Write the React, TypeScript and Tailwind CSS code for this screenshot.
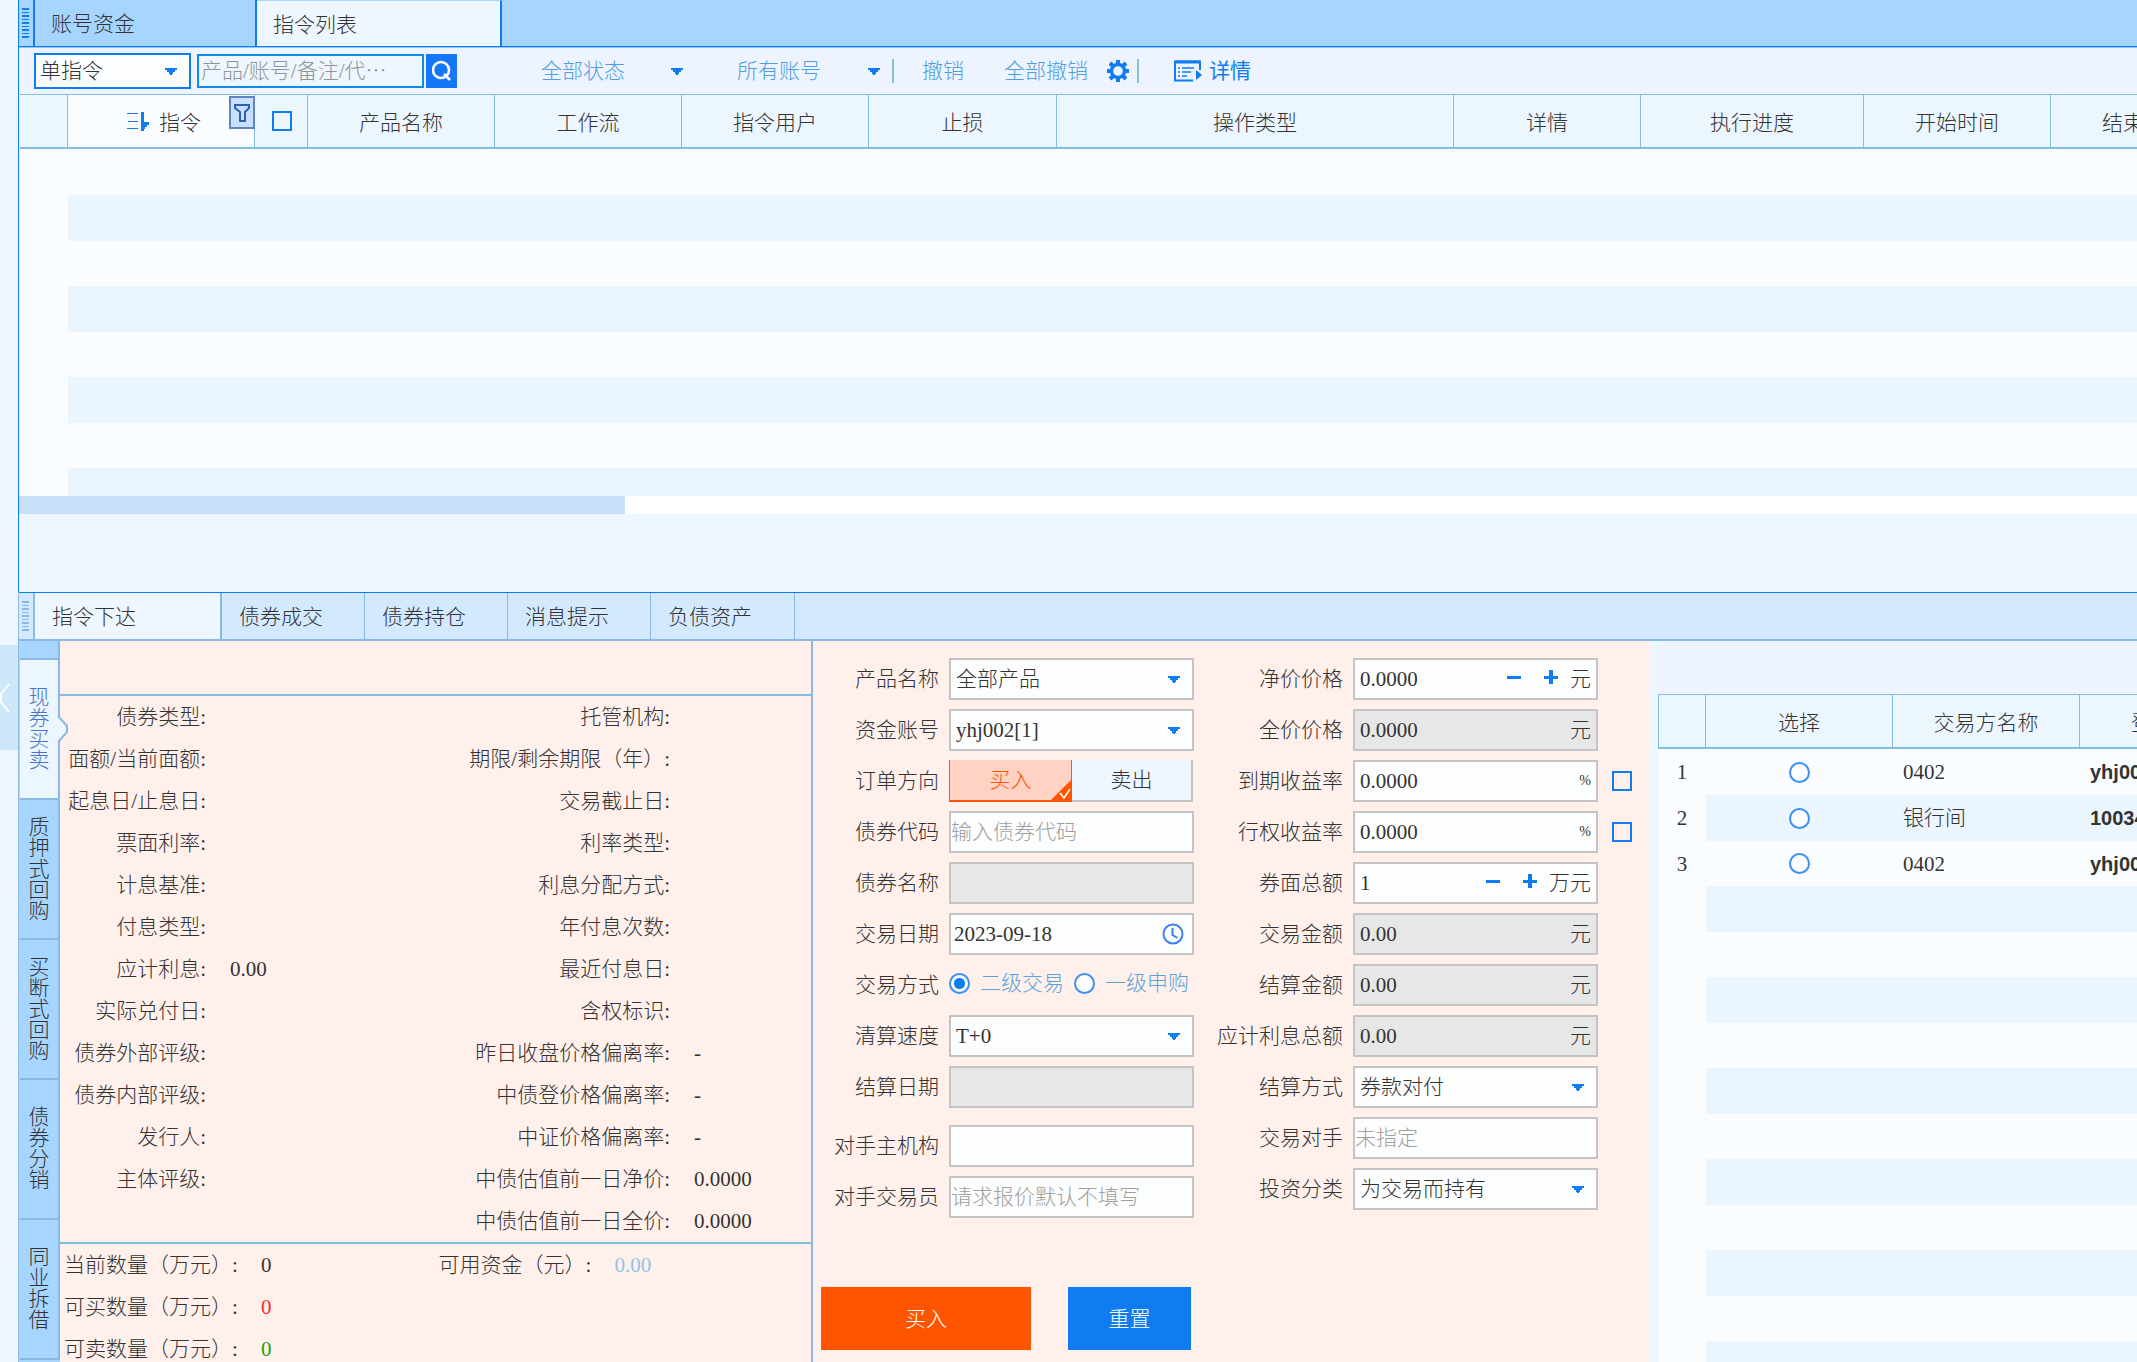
import { useState } from 'react';
import type { ReactNode } from 'react';

const orderColumns = [
  { title: '', width: 48 },
  { title: '指令', width: 187 },
  { title: '全选', width: 53 },
  { title: '产品名称', width: 187 },
  { title: '工作流', width: 187 },
  { title: '指令用户', width: 187 },
  { title: '止损', width: 188 },
  { title: '操作类型', width: 397 },
  { title: '详情', width: 187 },
  { title: '执行进度', width: 223 },
  { title: '开始时间', width: 187 },
  { title: '结束时间', width: 187 },
];

const bottomTabs = ['债券成交', '债券持仓', '消息提示', '负债资产'];

const businessTabs = ['现券买卖', '质押式回购', '买断式回购', '债券分销', '同业拆借'];

const bondInfo = [
  ['债券类型', ''],
  ['面额/当前面额', ''],
  ['起息日/止息日', ''],
  ['票面利率', ''],
  ['计息基准', ''],
  ['付息类型', ''],
  ['应计利息', '0.00'],
  ['实际兑付日', ''],
  ['债券外部评级', ''],
  ['债券内部评级', ''],
  ['发行人', ''],
  ['主体评级', ''],
];

const priceInfo = [
  ['托管机构', ''],
  ['期限/剩余期限（年）', ''],
  ['交易截止日', ''],
  ['利率类型', ''],
  ['利息分配方式', ''],
  ['年付息次数', ''],
  ['最近付息日', ''],
  ['含权标识', ''],
  ['昨日收盘价格偏离率', '-'],
  ['中债登价格偏离率', '-'],
  ['中证价格偏离率', '-'],
  ['中债估值前一日净价', '0.0000'],
  ['中债估值前一日全价', '0.0000'],
];

const quantities = [
  { label: '当前数量（万元）', value: '0', color: 'text-[#333333]' },
  { label: '可买数量（万元）', value: '0', color: 'text-[#ff2a2a]' },
  { label: '可卖数量（万元）', value: '0', color: 'text-[#12a512]' },
];

const counterparties = [
  { name: '0402', account: 'yhj002' },
  { name: '银行间', account: '100345' },
  { name: '0402', account: 'yhj003' },
];

const radioClass =
  'h-[21px] w-[21px] shrink-0 appearance-none rounded-full border-2 border-[#3b8ff5] bg-[#fbfdff] checked:bg-[radial-gradient(circle,#0f7cf2_5px,#fbfdff_6px)]';

const checkClass = 'h-5 w-5 shrink-0 appearance-none border-2 border-[#0f7cf2] bg-transparent';

function Caret() {
  return (
    <svg viewBox="0 0 12 7" className="pointer-events-none h-[7px] w-3 shrink-0" fill="#0f7cf2">
      <path d="M0 0h12v2h-2v2H8v2H7v1H5V6H4V4H2V2H0z" />
    </svg>
  );
}

function Grip({ color }: { color: string }) {
  return (
    <svg viewBox="0 0 7 30" className="h-[30px] w-[7px]" fill={color}>
      {[0, 4, 7, 11, 14, 18, 21, 25, 28].map((y, i) => (
        <rect key={y} x="0" y={y} width="7" height={i % 2 ? 1 : 2} />
      ))}
    </svg>
  );
}

function Field({ label, id, children, extra }: { label: string; id?: string; children: ReactNode; extra?: ReactNode }) {
  return (
    <div className="flex h-[42px] items-center gap-[10px]">
      <label htmlFor={id} className="w-[126px] shrink-0 text-right">
        {label}
      </label>
      <div className="flex h-full w-[245px] shrink-0 items-center">{children}</div>
      {extra}
    </div>
  );
}

function SelectBox({ id, value }: { id: string; value: string }) {
  return (
    <div className="relative flex h-full w-full items-center">
      <select id={id} className="h-full w-full appearance-none border-2 border-[#c4c4c4] bg-[#fcfdfd] pl-[5px] outline-none">
        <option>{value}</option>
      </select>
      <span className="pointer-events-none absolute right-3.5">
        <Caret />
      </span>
    </div>
  );
}

function TextBox({ id, placeholder, disabled }: { id: string; placeholder?: string; disabled?: boolean }) {
  return (
    <input
      id={id}
      type="text"
      placeholder={placeholder}
      disabled={disabled}
      className="h-full w-full border-2 border-[#c4c4c4] bg-[#fcfdfd] outline-none placeholder:text-[#a0a0a0] disabled:bg-[#e7e7e7]"
    />
  );
}

function AmountBox({ id, value, unit, disabled, stepper }: { id: string; value: string; unit: string; disabled?: boolean; stepper?: boolean }) {
  return (
    <div className={`flex h-full w-full items-center border-2 border-[#c4c4c4] pr-[5px] pl-[5px] ${disabled ? 'bg-[#e7e7e7]' : 'bg-[#fcfdfd]'}`}>
      <input id={id} type="text" defaultValue={value} disabled={disabled} className="min-w-0 flex-1 bg-transparent outline-none" />
      {stepper && (
        <div className="mr-3 mb-1 flex items-center gap-[23px]">
          <button type="button" aria-label="减少">
            <svg viewBox="0 0 14 14" className="block h-3.5 w-3.5" fill="#0f7cf2">
              <rect y="6" width="14" height="3" />
            </svg>
          </button>
          <button type="button" aria-label="增加">
            <svg viewBox="0 0 14 14" className="block h-3.5 w-3.5" fill="#0f7cf2">
              <path d="M5 0h4v6h5v3H9v5H5V9H0V6h5z" />
            </svg>
          </button>
        </div>
      )}
      <span className={unit === '%' ? 'text-sm' : ''}>{unit}</span>
    </div>
  );
}

function TopTabs() {
  return (
    <div className="flex h-12 border-b border-[#8fc8fb] bg-[#a6d5ff]">
      <div className="flex w-4 shrink-0 items-center border-r-2 border-b border-[#0f7cf2] pl-[3px]">
        <Grip color="#0f7cf2" />
      </div>
      <button type="button" className="w-[222px] border-r-2 border-b border-[#0f7cf2] pt-0.5 pl-4 text-left">
        账号资金
      </button>
      <button type="button" className="w-[245px] border-t border-r-2 border-b border-t-[#a6d5ff] border-r-[#0f7cf2] border-b-[#0f7cf2] bg-[#eef6ff] pt-0.5 pl-4 text-left">
        指令列表
      </button>
      <div className="flex-1 border-b border-[#0f7cf2]" />
    </div>
  );
}

function Toolbar() {
  return (
    <div className="flex h-[46px] items-center bg-[#edf3ff] pl-[15px] text-[#4f9fdf]">
      <div className="relative flex h-9 w-[157px] items-center">
        <select aria-label="指令类型" className="h-full w-full appearance-none border-2 border-[#0f7cf2] bg-[#fbfdff] pl-1 text-[#333333] outline-none">
          <option>单指令</option>
        </select>
        <span className="pointer-events-none absolute right-3.5">
          <Caret />
        </span>
      </div>
      <input
        type="text"
        aria-label="搜索"
        placeholder="产品/账号/备注/代⋯"
        className="ml-1.5 h-[34px] w-[227px] border-2 border-[#0f8bea] bg-[#eef6ff] pl-0.5 outline-none placeholder:text-[#909497]"
      />
      <button type="button" aria-label="查询" className="ml-0.5 flex h-[34px] w-[31px] items-center justify-center bg-[#1577f5]">
        <svg viewBox="0 0 20 22" className="h-[22px] w-5" fill="none" stroke="#ffffff" strokeWidth="2.6">
          <circle cx="9" cy="10" r="8" />
          <path d="M12 14l6 6" />
        </svg>
      </button>
      <button type="button" className="ml-[84px]">全部状态</button>
      <span className="ml-[46px]"><Caret /></span>
      <button type="button" className="ml-[54px]">所有账号</button>
      <span className="ml-[47px]"><Caret /></span>
      <span className="ml-3 h-6 w-0.5 bg-[#84bde2]" />
      <button type="button" className="ml-[28px]">撤销</button>
      <button type="button" className="ml-[40px]">全部撤销</button>
      <button type="button" aria-label="设置" className="ml-[19px]">
        <svg viewBox="0 0 22 22" className="h-[22px] w-[22px]" fill="none" stroke="#0f7cf2">
          <circle cx="11" cy="11" r="6.500" strokeWidth="3.400" />
          <g strokeWidth="4">
            <path d="M11 0v4M11 18v4M0 11h4M18 11h4M3 3l3 3M16 16l3 3M19 3l-3 3M6 16l-3 3" />
          </g>
        </svg>
      </button>
      <span className="ml-2 h-6 w-0.5 bg-[#84bde2]" />
      <button type="button" className="ml-[35px] flex items-center gap-[7px] font-normal text-[#0f7cf2]">
        <svg viewBox="0 0 28 22" className="h-[22px] w-7" fill="none" stroke="#0f7cf2" strokeWidth="2">
          <path d="M26 10V1.500H1V20.500H19" />
          <path d="M1 2h25" strokeWidth="3" />
          <path d="M4 8h2M8 8h12M4 12h2M8 12h9M4 16h2M8 16h5" strokeWidth="1.500" />
          <path d="M22 10l6 5-6 5z" fill="#0f7cf2" stroke="none" />
        </svg>
        详情
      </button>
    </div>
  );
}

function OrderHeader({ title }: { title: string }) {
  if (title === '指令') {
    return (
      <div className="relative flex h-full items-center pl-[59px]">
        <svg viewBox="0 0 22 20" className="mr-2.5 h-5 w-[22px]" fill="#0f7cf2">
          <path d="M0 2h11v1H0zM1 10h10v1H1zM0 17h11v1H0zM14 1h3v10h5v3h-2v2h-2v2h-1v2h-3z" />
        </svg>
        <span className="pt-1">指令</span>
        <button type="button" aria-label="筛选" className="absolute top-px -right-px flex h-[33px] w-[26px] items-center justify-center border-2 border-[#5f84bf] bg-[#c9dfff]">
          <svg viewBox="0 0 16 18" className="h-[18px] w-4" fill="none" stroke="#2b60b5" strokeWidth="2">
            <path d="M1 1h14v3l-4 4v9H6V8L1 4z" />
          </svg>
        </button>
      </div>
    );
  }
  if (title === '全选') {
    return (
      <div className="flex items-center pl-[17px]">
        <input type="checkbox" aria-label="全选" className={checkClass} />
      </div>
    );
  }
  return <span className="block pt-1">{title}</span>;
}

function OrderTable() {
  return (
    <div className="h-[402px] overflow-hidden bg-[#fafdff] pl-px">
      <table className="w-[2218px] table-fixed border-separate border-spacing-0">
        <colgroup>
          {orderColumns.map((column, index) => (
            <col key={index} style={{ width: column.width }} />
          ))}
        </colgroup>
        <thead>
          <tr>
            {orderColumns.map((column, index) => (
              <th
                key={index}
                className={`h-[55px] border-t border-r border-b-2 border-[#84bde2] p-0 font-light ${column.title === '指令' ? 'bg-[#fafdff]' : 'bg-[#ebf6ff]'}`}
              >
                <OrderHeader title={column.title} />
              </th>
            ))}
          </tr>
        </thead>
        <tbody>
          <tr>
            <td className="h-[46px] p-0" colSpan={12} />
          </tr>
          {[0, 1, 2, 3, 4, 5, 6].map((row) => (
            <tr key={row} className={row % 2 ? 'h-[45px]' : 'h-[46px]'}>
              <td className="p-0" />
              <td className={row % 2 ? 'p-0' : 'bg-[#eaf5fe] p-0'} colSpan={11} />
            </tr>
          ))}
        </tbody>
      </table>
    </div>
  );
}

function BottomTabs() {
  return (
    <div className="flex h-[49px] shrink-0 border-t border-b-2 border-t-[#0f7cf2] border-b-[#8ab9e6] bg-[#d2e9ff]">
      <div className="flex w-4 shrink-0 items-center border-r-2 border-[#8ab9e6] pl-[3px]">
        <Grip color="#8ab9e6" />
      </div>
      <button type="button" className="w-[187px] border-r-2 border-[#8ab9e6] bg-[#eef6ff] pt-0.5 pl-[17px] text-left">
        指令下达
      </button>
      {bottomTabs.map((tab) => (
        <button key={tab} type="button" className="w-[143px] border-r border-[#8ab9e6] pt-0.5 pl-[17px] text-left last:w-36">
          {tab}
        </button>
      ))}
    </div>
  );
}

function BusinessTabs({ active, onSelect }: { active: string; onSelect: (tab: string) => void }) {
  return (
    <div className="relative w-[41px] shrink-0 bg-[#a6d5ff] pl-px">
      <div className="h-[19px] border-r-2 border-b-2 border-[#8ab9e6]" />
      {businessTabs.map((tab) => (
        <button
          key={tab}
          type="button"
          onClick={() => onSelect(tab)}
          className={`relative flex h-[140px] w-full items-center justify-center border-r-2 border-b-2 border-[#8ab9e6] ${
            tab === active ? 'bg-[#ebf6ff] text-[#4a72c8]' : ''
          }`}
        >
          <span className="w-[21px] leading-[21px] break-all">{tab}</span>
          {tab === active && (
            <svg viewBox="0 0 12 28" className="absolute -right-[11px] h-7 w-3" fill="#ebf6ff">
              <path d="M0 1h1l9 10v6L1 27H0z" />
              <path d="M1 1l9 10v6L1 27" fill="none" stroke="#8ab9e6" strokeWidth="2" />
            </svg>
          )}
        </button>
      ))}
    </div>
  );
}

function InfoList({ rows, labelWidth }: { rows: string[][]; labelWidth: string }) {
  return (
    <dl>
      {rows.map(([label, value]) => (
        <div key={label} className="flex h-[42px] items-center">
          <dt className={`shrink-0 pr-1 text-right whitespace-nowrap ${labelWidth}`}>{label}:</dt>
          <dd className="pl-5">{value}</dd>
        </div>
      ))}
    </dl>
  );
}

function BondPanel() {
  return (
    <div className="w-[753px] shrink-0 border-r-2 border-[#8ab9e6]">
      <div className="h-[55px] border-b-2 border-[#84bde2]" />
      <div className="flex h-[548px] border-b-2 border-[#84bde2]">
        <InfoList rows={bondInfo} labelWidth="w-[150px]" />
        <div className="ml-auto w-[367px]">
          <InfoList rows={priceInfo} labelWidth="w-[230px]" />
        </div>
      </div>
      <div className="flex pl-1">
        <dl>
          {quantities.map((item) => (
            <div key={item.label} className="flex h-[42px] items-center">
              <dt className="w-[197px] whitespace-nowrap">{item.label}:</dt>
              <dd className={item.color}>{item.value}</dd>
            </div>
          ))}
        </dl>
        <dl className="ml-[167px] flex h-[42px] items-center">
          <dt className="w-[176px] whitespace-nowrap">可用资金（元）:</dt>
          <dd className="text-[#8ec4ea]">0.00</dd>
        </dl>
      </div>
    </div>
  );
}

function OrderForm() {
  const [side, setSide] = useState('buy');

  return (
    <div className="w-[836px] shrink-0 pt-[17px]">
      <div className="flex gap-[23px]">
        <div className="flex flex-col gap-[9px]">
          <Field label="产品名称" id="product">
            <SelectBox id="product" value="全部产品" />
          </Field>
          <Field label="资金账号" id="account">
            <SelectBox id="account" value="yhj002[1]" />
          </Field>
          <Field label="订单方向">
            <button
              type="button"
              onClick={() => setSide('buy')}
              className="relative h-full w-[123px] border-r border-b-2 border-l border-[#ff5500] bg-[#ffd2c4] text-[#ff5500]"
            >
              买入
              {side === 'buy' && (
                <svg viewBox="0 0 20 20" className="absolute right-0 bottom-0 h-5 w-5">
                  <path d="M20 0v20H0z" fill="#ff5500" />
                  <path d="M9 13l4 5 6-9" fill="none" stroke="#ffffff" strokeWidth="1.500" />
                </svg>
              )}
            </button>
            <button type="button" onClick={() => setSide('sell')} className="h-full w-[121px] border-r-2 border-b-2 border-[#c4c4c4] bg-[#eef6ff]">
              卖出
            </button>
          </Field>
          <Field label="债券代码" id="bond-code">
            <TextBox id="bond-code" placeholder="输入债券代码" />
          </Field>
          <Field label="债券名称" id="bond-name">
            <TextBox id="bond-name" disabled />
          </Field>
          <Field label="交易日期" id="trade-date">
            <div className="flex h-full w-full items-center border-2 border-[#c4c4c4] bg-[#fcfdfd] pr-2 pl-[3px]">
              <input id="trade-date" type="text" defaultValue="2023-09-18" className="min-w-0 flex-1 bg-transparent outline-none" />
              <svg viewBox="0 0 22 22" className="h-[22px] w-[22px]" fill="none" stroke="#3b7ff0" strokeWidth="2">
                <circle cx="11" cy="11" r="9.500" />
                <path d="M10.500 5v7l5 3" />
              </svg>
            </div>
          </Field>
          <Field label="交易方式">
            <div className="flex items-center pb-1 text-[#5aa2dc]">
              <input id="secondary" type="radio" name="mode" defaultChecked className={radioClass} />
              <label htmlFor="secondary" className="mr-2.5 ml-2.5">二级交易</label>
              <input id="primary" type="radio" name="mode" className={radioClass} />
              <label htmlFor="primary" className="ml-2.5">一级申购</label>
            </div>
          </Field>
          <Field label="清算速度" id="speed">
            <SelectBox id="speed" value="T+0" />
          </Field>
          <Field label="结算日期" id="settle-date">
            <TextBox id="settle-date" disabled />
          </Field>
          <div className="mt-2 flex flex-col gap-[9px]">
            <Field label="对手主机构" id="org">
              <TextBox id="org" />
            </Field>
            <Field label="对手交易员" id="trader">
              <TextBox id="trader" placeholder="请求报价默认不填写" />
            </Field>
          </div>
        </div>

        <div className="flex flex-col gap-[9px]">
          <Field label="净价价格" id="clean">
            <AmountBox id="clean" value="0.0000" unit="元" stepper />
          </Field>
          <Field label="全价价格" id="dirty">
            <AmountBox id="dirty" value="0.0000" unit="元" disabled />
          </Field>
          <Field label="到期收益率" id="ytm" extra={<input type="checkbox" aria-label="使用到期收益率" className={`ml-1 ${checkClass}`} />}>
            <AmountBox id="ytm" value="0.0000" unit="%" />
          </Field>
          <Field label="行权收益率" id="ytc" extra={<input type="checkbox" aria-label="使用行权收益率" className={`ml-1 ${checkClass}`} />}>
            <AmountBox id="ytc" value="0.0000" unit="%" />
          </Field>
          <Field label="券面总额" id="face">
            <AmountBox id="face" value="1" unit="万元" stepper />
          </Field>
          <Field label="交易金额" id="trade-amount">
            <AmountBox id="trade-amount" value="0.00" unit="元" disabled />
          </Field>
          <Field label="结算金额" id="settle-amount">
            <AmountBox id="settle-amount" value="0.00" unit="元" disabled />
          </Field>
          <Field label="应计利息总额" id="interest">
            <AmountBox id="interest" value="0.00" unit="元" disabled />
          </Field>
          <Field label="结算方式" id="settle-mode">
            <SelectBox id="settle-mode" value="券款对付" />
          </Field>
          <Field label="交易对手" id="counterparty">
            <TextBox id="counterparty" placeholder="未指定" />
          </Field>
          <Field label="投资分类" id="category">
            <SelectBox id="category" value="为交易而持有" />
          </Field>
        </div>
      </div>

      <div className="mt-[69px] flex gap-[37px] pl-2 text-white">
        <button type="submit" className="h-[63px] w-[210px] bg-[#ff5500]">
          买入
        </button>
        <button type="reset" className="h-[63px] w-[123px] bg-[#0f7cf2]">
          重置
        </button>
      </div>
    </div>
  );
}

function CounterpartyTable() {
  const headers = ['', '选择', '交易方名称', '登录账号'];

  return (
    <div className="min-w-0 flex-1 overflow-hidden border-l-[9px] border-[#eef6ff] bg-[#fafdff]">
      <div className="h-[53px] bg-[#edf3ff]" />
      <table className="w-[609px] table-fixed border-separate border-spacing-0">
        <colgroup>
          <col className="w-12" />
          <col className="w-[187px]" />
          <col className="w-[187px]" />
          <col className="w-[187px]" />
        </colgroup>
        <thead>
          <tr>
            {headers.map((header) => (
              <th key={header} className="h-[55px] border-t border-r border-b-2 border-[#84bde2] bg-[#ebf6ff] p-0 font-light first:border-l">
                <span className="block pt-1">{header}</span>
              </th>
            ))}
          </tr>
        </thead>
        <tbody>
          {Array.from({ length: 14 }, (_, row) => {
            const item = counterparties[row];
            const cell = row % 2 ? 'bg-[#eaf5fe] p-0' : 'p-0';
            return (
              <tr key={row} className={row % 2 || row === 0 ? 'h-[46px]' : 'h-[45px]'}>
                <td className="p-0 text-center">{item ? row + 1 : ''}</td>
                <td className={cell}>
                  {item && (
                    <div className="flex justify-center">
                      <input type="radio" name="counterparty" aria-label={`选择 ${row + 1}`} className={radioClass} />
                    </div>
                  )}
                </td>
                <td className={`${cell} pl-2.5`}>{item?.name}</td>
                <td className={`${cell} pl-2.5 font-['Liberation_Sans',sans-serif] text-xl font-bold`}>{item?.account}</td>
              </tr>
            );
          })}
        </tbody>
      </table>
    </div>
  );
}

export default function App() {
  const [business, setBusiness] = useState('现券买卖');

  return (
    <div className="flex h-screen overflow-hidden bg-[#eef6ff] font-['Liberation_Serif','Noto_Sans_CJK_SC',serif] text-[21px] leading-7 font-light text-[#333333]">
      <aside className="flex w-[18px] shrink-0 flex-col pt-[645px]">
        <button type="button" aria-label="收起" className="h-[105px] bg-[#cce7f9]">
          <svg viewBox="0 0 10 30" className="h-[30px] w-2.5" fill="none" stroke="#ffffff" strokeWidth="2">
            <path d="M9 1L1 11v8l8 10" />
          </svg>
        </button>
      </aside>

      <main className="flex min-w-0 flex-1 flex-col">
        <section className="h-[592px] shrink-0 border-l border-[#0f7cf2]">
          <TopTabs />
          <Toolbar />
          <OrderTable />
          <div className="h-[18px] bg-white">
            <div className="h-full w-[606px] bg-[#c6e0f7]" />
          </div>
        </section>

        <section className="flex min-h-0 flex-1 flex-col border-l border-[#8ab9e6]">
          <BottomTabs />
          <div className="flex min-h-0 flex-1 bg-[#fff0eb]">
            <BusinessTabs active={business} onSelect={setBusiness} />
            <BondPanel />
            <OrderForm />
            <CounterpartyTable />
          </div>
        </section>
      </main>
    </div>
  );
}
